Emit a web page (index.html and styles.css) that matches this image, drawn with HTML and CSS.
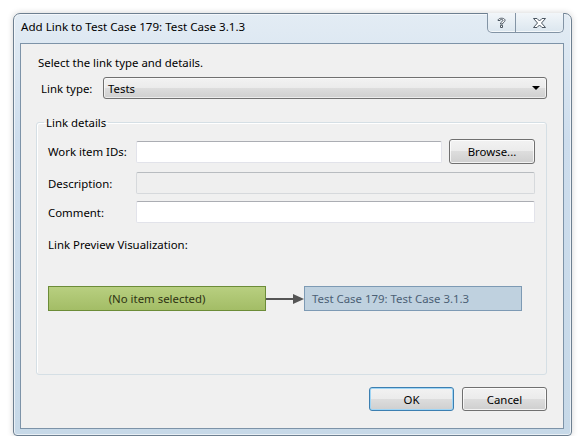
FILE: index.html
```html
<!DOCTYPE html>
<html>
<head>
<meta charset="utf-8">
<link rel="stylesheet" href="styles.css">
</head>
<body>
<div class="window">
  <div class="titlebar">
    <span class="title">Add Link to Test Case 179: Test Case 3.1.3</span>
    <div class="caption-btns">
      <div class="cbtn help">
        <svg width="11" height="13" viewBox="0 0 11 13"><path d="M2 4.5 C2 1.5 9 1.5 9 4.3 C9 6.3 6.5 6.3 6.5 8 L4.5 8 C4.5 5.5 7 5.6 7 4.4 C7 3 4 3 4 4.5 Z M4.5 9.3 H6.5 V11.5 H4.5 Z" fill="#fff" stroke="#4a5560" stroke-width="1" stroke-linejoin="round"/></svg>
      </div>
      <div class="cbtn close">
        <svg width="15" height="12" viewBox="0 0 15 12"><path d="M1.5 1.5 H5 L7.5 4 L10 1.5 H13.5 L9.5 6 L13.5 10.5 H10 L7.5 8 L5 10.5 H1.5 L5.5 6 Z" fill="#fff" stroke="#4a5560" stroke-width="1" stroke-linejoin="round"/></svg>
      </div>
    </div>
  </div>
  <div class="client">
    <div class="intro">Select the link type and details.</div>
    <div class="linktype-row">
      <span class="lt-label">Link type:</span>
      <div class="combo">
        <span>Tests</span>
        <span class="combo-arrow"></span>
      </div>
    </div>
    <fieldset class="group">
      <legend>Link details</legend>
      <div class="form-grid">
        <span class="flabel">Work item IDs:</span>
        <div class="input ids"></div>
        <div class="btn browse">Browse...</div>
        <span class="flabel">Description:</span>
        <div class="input disabled wide"></div>
        <span class="flabel">Comment:</span>
        <div class="input wide"></div>
      </div>
      <div class="preview-label">Link Preview Visualization:</div>
      <div class="preview">
        <div class="node source">(No item selected)</div>
        <div class="arrow">
          <span class="arrow-line"></span>
          <span class="arrow-head"></span>
        </div>
        <div class="node target">Test Case 179: Test Case 3.1.3</div>
      </div>
    </fieldset>
    <div class="actions">
      <div class="btn ok">OK</div>
      <div class="btn">Cancel</div>
    </div>
  </div>
</div>
</body>
</html>
```

FILE: styles.css
```css
* { box-sizing: border-box; }
html, body { margin: 0; background: #fff; }
body {
  padding: 13px 0 0 13px;
  font-family: "Segoe UI", "Noto Sans", sans-serif;
  font-size: 11.4px;
  color: #000;
}
.window {
  width: 559px;
  border: 1px solid #6d7f90;
  border-radius: 7px 7px 4px 4px;
  background: linear-gradient(#e3ecf4, #cddded 30%, #c7d9e8);
  padding: 0 7px 6px 6px;
  box-shadow: 0 0 6px rgba(0,0,0,0.18), inset 0 0 0 1px rgba(255,255,255,0.6);
}
.titlebar {
  display: flex;
  align-items: flex-start;
  height: 29px;
}
.title {
  padding: 5px 0 0 1px;
  line-height: 16px;
  font-size: 11.6px;
  color: #000;
}
.caption-btns {
  margin-left: auto;
  margin-top: -1px;
  display: flex;
  height: 20px;
  border: 1px solid #8394a5;
  border-top: none;
  border-radius: 0 0 5px 5px;
  background: linear-gradient(#f2f6f9, #dbe6ef);
  overflow: hidden;
  box-shadow: inset 0 -1px 0 rgba(255,255,255,0.7);
}
.cbtn {
  display: flex;
  align-items: center;
  justify-content: center;
}
.cbtn.help { width: 28px; border-right: 1px solid #8394a5; }
.cbtn.close { width: 47px; }
.client {
  background: #f0f0f0;
  border: 1px solid #7d93a8;
  padding: 11px 16px 17px 15px;
}
.intro {
  line-height: 15px;
  padding-left: 2px;
}
.linktype-row {
  display: flex;
  align-items: center;
  margin-top: 7px;
}
.lt-label {
  width: 67px;
  padding-left: 5px;
}
.combo {
  flex: 1;
  height: 22px;
  border: 1px solid #707070;
  border-radius: 3px;
  background: linear-gradient(#f2f2f2, #ebebeb 50%, #dddddd 50%, #cfcfcf);
  box-shadow: inset 0 0 0 1px rgba(255,255,255,0.6);
  display: flex;
  align-items: center;
  padding: 0 6px 0 4px;
}
.combo-arrow {
  margin-left: auto;
  width: 0; height: 0;
  border-left: 4px solid transparent;
  border-right: 4px solid transparent;
  border-top: 4px solid #000;
}
.group {
  margin: 16px 0 0 0;
  border: 1px solid #d5dfe5;
  border-radius: 3px;
  padding: 9px 11px 63px 11px;
  box-shadow: inset 1px 1px 0 #fff;
}
.group legend {
  margin-left: -4px;
  padding: 0 2px;
  line-height: 15px;
}
.form-grid {
  display: grid;
  grid-template-columns: 81px 1fr auto;
  column-gap: 7px;
  align-items: center;
}
.input {
  height: 22px;
  background: #fff;
  border: 1px solid #e2e3ea;
  border-top-color: #abadb3;
  border-radius: 2px;
}
.ids { grid-column: 2; }
.wide { grid-column: 2 / 4; }
.input.disabled {
  background: #efefef;
  border-color: #d6d9dc;
  border-top-color: #b8bcc0;
}
.form-grid > :nth-child(4), .form-grid > :nth-child(5) { margin-top: 8px; }
.form-grid > :nth-child(6), .form-grid > :nth-child(7) { margin-top: 7px; }
.btn {
  height: 24px;
  width: 85px;
  border: 1px solid #707070;
  border-radius: 3px;
  background: linear-gradient(#f2f2f2, #ebebeb 50%, #dddddd 50%, #cfcfcf);
  box-shadow: inset 0 0 0 1px rgba(255,255,255,0.75);
  display: flex;
  align-items: center;
  justify-content: center;
}
.browse { height: 25px; width: 86px; }
.preview-label {
  margin-top: 14px;
  line-height: 15px;
}
.preview {
  display: flex;
  align-items: center;
  margin-top: 34px;
}
.node {
  width: 218px;
  height: 25px;
  display: flex;
  align-items: center;
  white-space: nowrap;
}
.source {
  background: linear-gradient(#b8cf80, #a3bd66);
  border: 1px solid #6c8c38;
  justify-content: center;
  color: #2e3312;
}
.target {
  background: #bfd1df;
  border: 1px solid #7d9ab4;
  color: #4b6075;
  padding-left: 7px;
}
.arrow {
  width: 38px;
  display: flex;
  align-items: center;
}
.arrow-line {
  flex: 1;
  height: 2px;
  background: #555;
}
.arrow-head {
  width: 0; height: 0;
  border-top: 5px solid transparent;
  border-bottom: 5px solid transparent;
  border-left: 11px solid #555;
}
.actions {
  display: flex;
  justify-content: flex-end;
  gap: 8px;
  margin-top: 12px;
}
.ok {
  border-color: #3c7fb1;
  box-shadow: inset 0 0 0 1px #9fd5f5;
}
```
